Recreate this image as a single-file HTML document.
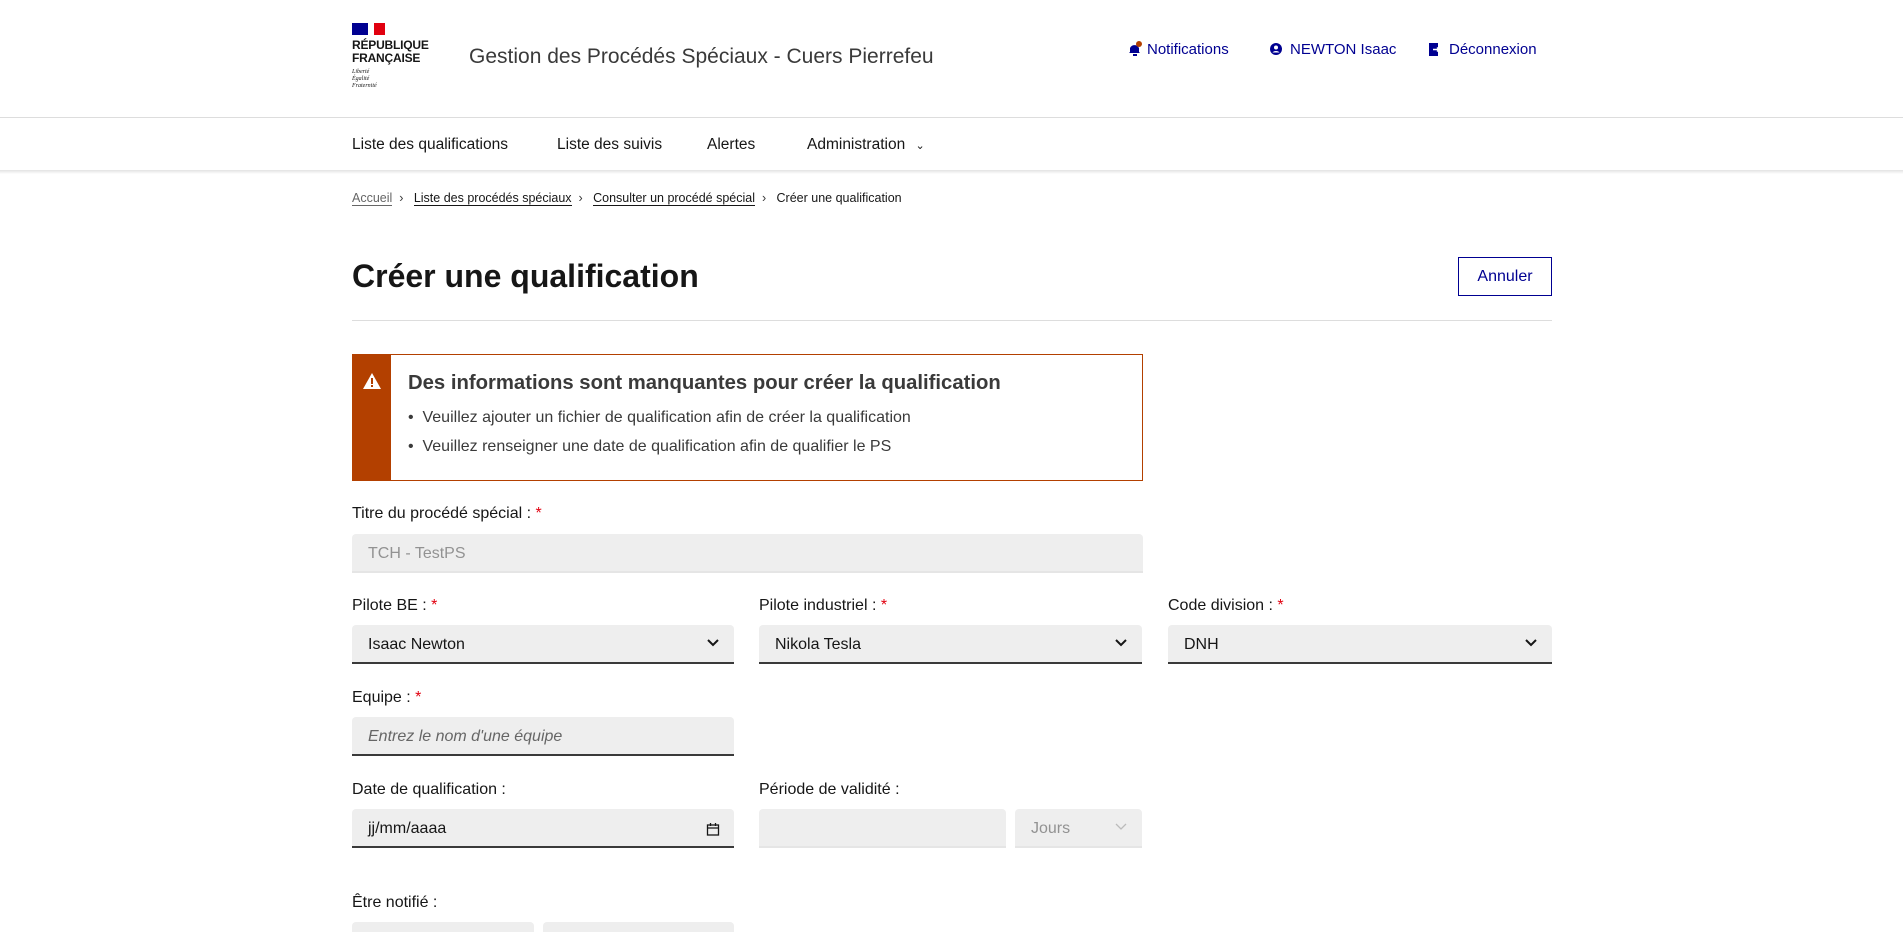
<!DOCTYPE html>
<html><head><meta charset="utf-8"><style>
*{box-sizing:border-box;margin:0;padding:0}
body{width:1903px;height:929px;overflow:hidden;background:#fff;font-family:"Liberation Sans",sans-serif;color:#161616;position:relative}
.a{position:absolute;white-space:nowrap}
.lbl{font-size:16px;color:#161616}
.lbl b{color:#e1000f;font-weight:normal}
.inp{position:absolute;background:#eee;border-radius:4px 4px 0 0;box-shadow:inset 0 -2px 0 #3a3a3a;height:39px;font-size:16px;padding:11px 16px;color:#161616}
.dis{box-shadow:inset 0 -2px 0 #e5e5e5;color:#929292}
.chev{position:absolute;right:14px;top:13px}
.blue{color:#000091}
</style></head><body>
<div class="a" style="left:352px;top:23px;width:16px;height:12px;background:#000091"></div>
<div class="a" style="left:374px;top:23px;width:11px;height:12px;background:#e1000f"></div>
<div class="a" style="left:352px;top:39px;font-size:12px;font-weight:bold;line-height:13px;letter-spacing:-0.2px">RÉPUBLIQUE<br>FRANÇAISE</div>
<div class="a" style="left:352px;top:69px;font-size:6px;font-style:italic;line-height:7px;font-family:'Liberation Serif',serif">Liberté<br>Égalité<br>Fraternité</div>
<div class="a" style="left:469px;top:45px;font-size:21px;color:#3a3a3a">Gestion des Procédés Spéciaux - Cuers Pierrefeu</div>
<div class="a blue" style="left:1128px;top:41px;font-size:15px">
<svg width="14" height="15" viewBox="0 0 14 15" style="vertical-align:-2px;margin-right:5px"><path d="M2 11V7a5 5 0 0 1 9 0v4l1 1H1z" fill="#000091"/><rect x="5" y="13" width="4" height="2" fill="#000091"/><circle cx="11" cy="3" r="3" fill="#b34000"/></svg>Notifications</div>
<div class="a blue" style="left:1270px;top:41px;font-size:15px">
<svg width="12" height="12" viewBox="0 0 12 12" style="vertical-align:-1px;margin-right:8px"><circle cx="6" cy="6" r="6" fill="#000091"/><circle cx="6" cy="4.5" r="2" fill="#fff"/><path d="M2.5 9.5a4 3 0 0 1 7 0" fill="#fff"/></svg>NEWTON Isaac</div>
<div class="a blue" style="left:1429px;top:41px;font-size:15px">
<svg width="11" height="13" viewBox="0 0 11 13" style="vertical-align:-2px;margin-right:9px"><rect width="9" height="13" fill="#000091"/><path d="M4 6.5h6M8 4.5l2 2-2 2" stroke="#fff" stroke-width="1.4" fill="none"/></svg>Déconnexion</div>
<div class="a" style="left:0;top:117px;width:1903px;height:1px;background:#ddd"></div>
<div class="a" style="left:0;top:170px;width:1903px;height:4px;background:linear-gradient(#e2e2e2,#fff)"></div>
<div class="a" style="left:352px;top:136px;font-size:15.5px">Liste des qualifications</div>
<div class="a" style="left:557px;top:136px;font-size:15.5px">Liste des suivis</div>
<div class="a" style="left:707px;top:136px;font-size:15.5px">Alertes</div>
<div class="a" style="left:807px;top:136px;font-size:15.5px">Administration <span style="font-size:11px;margin-left:6px">&#8964;</span></div>
<div class="a" style="left:352px;top:191px;font-size:12.5px;color:#3a3a3a">
<span style="border-bottom:1px solid #666;color:#666">Accueil</span>&nbsp;&nbsp;›&nbsp;&nbsp;
<span style="border-bottom:1px solid #161616;color:#161616">Liste des procédés spéciaux</span>&nbsp;&nbsp;›&nbsp;&nbsp;
<span style="border-bottom:1px solid #161616;color:#161616">Consulter un procédé spécial</span>&nbsp;&nbsp;›&nbsp;&nbsp;
<span style="color:#161616">Créer une qualification</span></div>
<div class="a" style="left:352px;top:258px;font-size:32px;font-weight:bold">Créer une qualification</div>
<div class="a blue" style="left:1458px;top:257px;width:94px;height:39px;border:1px solid #000091;font-size:16px;text-align:center;line-height:37px">Annuler</div>
<div class="a" style="left:352px;top:320px;width:1200px;height:1px;background:#ddd"></div>
<div class="a" style="left:352px;top:354px;width:791px;height:127px;border:1px solid #b34000"></div>
<div class="a" style="left:352px;top:354px;width:39px;height:127px;background:#b34000"></div>
<svg class="a" style="left:362px;top:372px" width="20" height="18" viewBox="0 0 20 18"><path d="M10 1L19 17H1z" fill="#fff"/><rect x="9" y="6" width="2" height="6" fill="#b34000"/><rect x="9" y="13" width="2" height="2" fill="#b34000"/></svg>
<div class="a" style="left:408px;top:372px;font-size:20.3px;font-weight:bold;color:#3a3a3a">Des informations sont manquantes pour créer la qualification</div>
<div class="a" style="left:408px;top:403px;font-size:16px;line-height:29px;color:#3a3a3a">•&nbsp;&nbsp;Veuillez ajouter un fichier de qualification afin de créer la qualification<br>•&nbsp;&nbsp;Veuillez renseigner une date de qualification afin de qualifier le PS</div>
<div class="a lbl" style="left:352px;top:505px">Titre du procédé spécial : <b>*</b></div>
<div class="inp dis" style="left:352px;top:534px;width:791px">TCH - TestPS</div>
<div class="a lbl" style="left:352px;top:597px">Pilote BE : <b>*</b></div>
<div class="a lbl" style="left:759px;top:597px">Pilote industriel : <b>*</b></div>
<div class="a lbl" style="left:1168px;top:597px">Code division : <b>*</b></div>
<div class="inp" style="left:352px;top:625px;width:382px">Isaac Newton<svg class="chev" width="14" height="10"><path d="M2 2l5 5 5-5" stroke="#161616" stroke-width="2" fill="none"/></svg></div>
<div class="inp" style="left:759px;top:625px;width:383px">Nikola Tesla<svg class="chev" width="14" height="10"><path d="M2 2l5 5 5-5" stroke="#161616" stroke-width="2" fill="none"/></svg></div>
<div class="inp" style="left:1168px;top:625px;width:384px">DNH<svg class="chev" width="14" height="10"><path d="M2 2l5 5 5-5" stroke="#161616" stroke-width="2" fill="none"/></svg></div>
<div class="a lbl" style="left:352px;top:689px">Equipe : <b>*</b></div>
<div class="inp" style="left:352px;top:717px;width:382px;font-style:italic;color:#666">Entrez le nom d'une équipe</div>
<div class="a lbl" style="left:352px;top:781px">Date de qualification :</div>
<div class="a lbl" style="left:759px;top:781px">Période de validité :</div>
<div class="inp" style="left:352px;top:809px;width:382px">jj/mm/aaaa<svg class="chev" width="14" height="14" viewBox="0 0 14 14"><rect x="1.5" y="3" width="11" height="10" fill="none" stroke="#161616" stroke-width="1.3"/><path d="M1.5 6h11M4.5 1v3M9.5 1v3" stroke="#161616" stroke-width="1.3"/></svg></div>
<div class="inp dis" style="left:759px;top:809px;width:247px"></div>
<div class="inp dis" style="left:1015px;top:809px;width:127px">Jours<svg class="chev" width="14" height="10"><path d="M2 2l5 5 5-5" stroke="#bbb" stroke-width="1.3" fill="none"/></svg></div>
<div class="a lbl" style="left:352px;top:894px">Être notifié :</div>
<div class="a" style="left:352px;top:922px;width:182px;height:10px;background:#eee;border-radius:4px 4px 0 0"></div>
<div class="a" style="left:543px;top:922px;width:191px;height:10px;background:#eee;border-radius:4px 4px 0 0"></div>
</body></html>
